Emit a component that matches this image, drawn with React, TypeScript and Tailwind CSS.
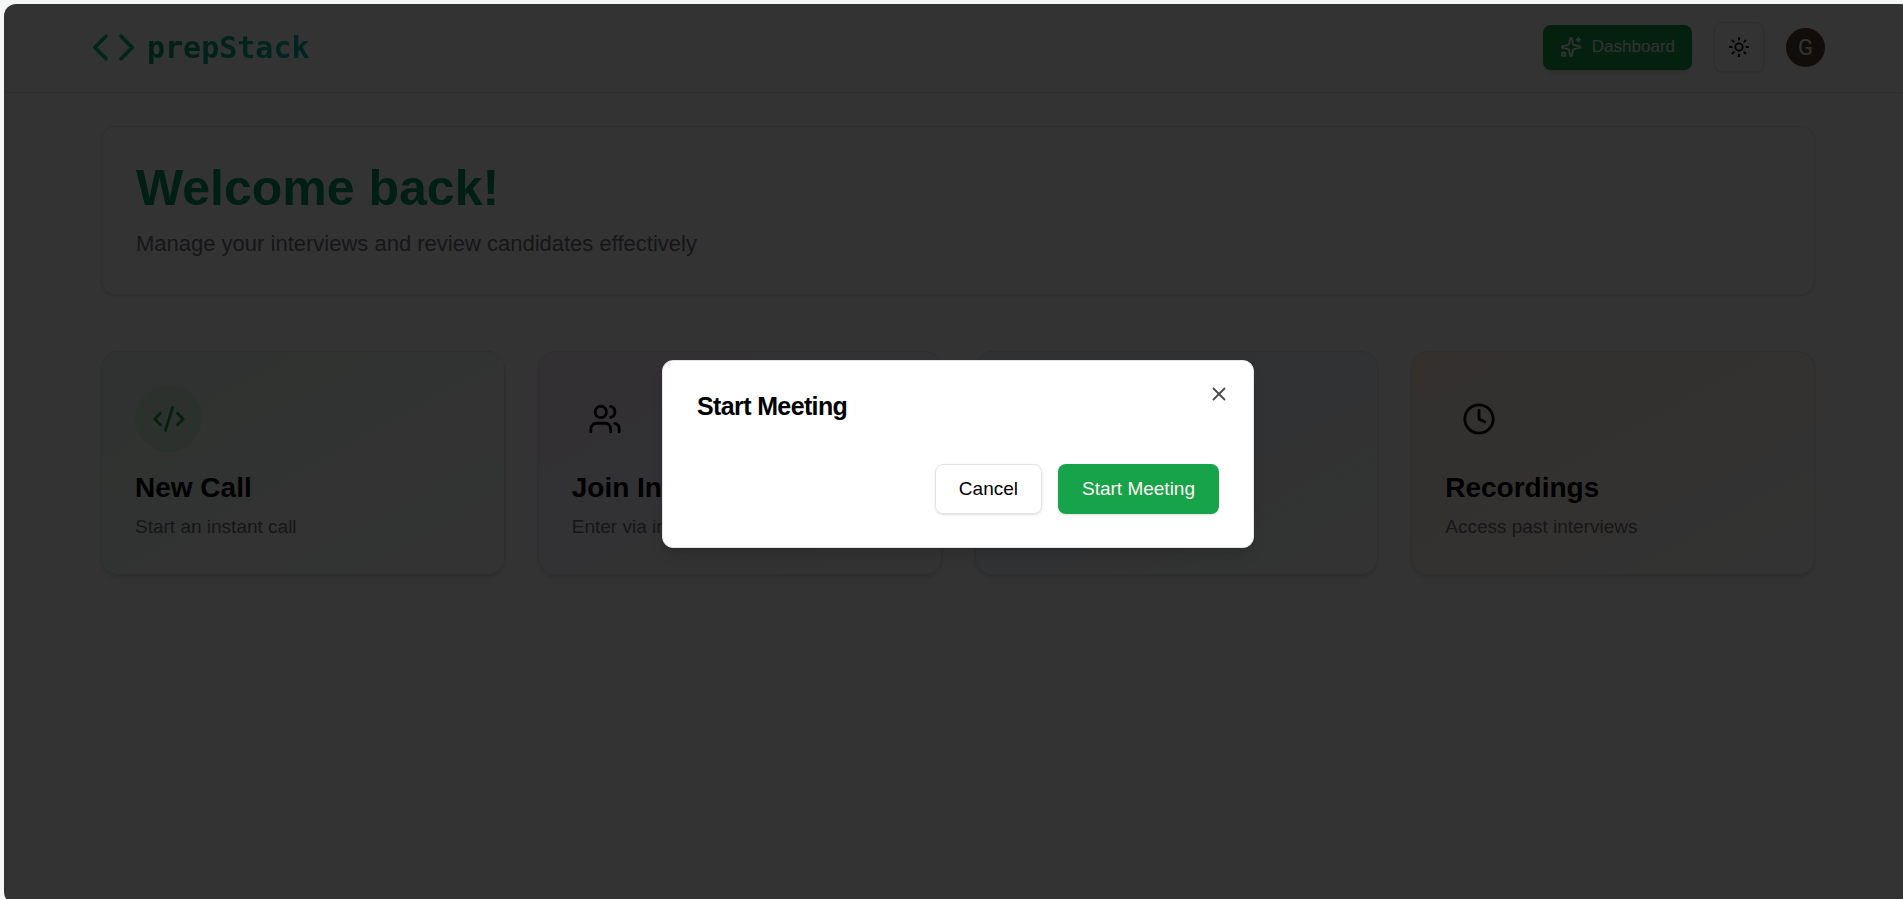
import type { LucideIcon } from "lucide-react";
import { Code, CodeXml, Users, Calendar, Clock, Sun, X } from "lucide-react";

type Action = {
  title: string;
  description: string;
  icon: LucideIcon;
  card: string;
  badge: string;
};

const actions: Action[] = [
  {
    title: "New Call",
    description: "Start an instant call",
    icon: CodeXml,
    card: "from-[#22c55e]/8",
    badge: "bg-[#16a34a]/10 text-[#16a34a]",
  },
  {
    title: "Join Interview",
    description: "Enter via invitation link",
    icon: Users,
    card: "from-purple-500/10",
    badge: "text-black",
  },
  {
    title: "Schedule",
    description: "Plan upcoming calls",
    icon: Calendar,
    card: "from-blue-500/10",
    badge: "text-black",
  },
  {
    title: "Recordings",
    description: "Access past interviews",
    icon: Clock,
    card: "from-orange-500/10",
    badge: "text-black",
  },
];

function SparkleIcon() {
  return (
    <svg
      viewBox="0 0 24 24"
      className="size-[22px]"
      fill="none"
      stroke="currentColor"
      strokeWidth="2"
      strokeLinecap="round"
      strokeLinejoin="round"
      aria-hidden="true"
    >
      <path d="M11.017 2.814a1 1 0 0 1 1.966 0l1.051 5.558a2 2 0 0 0 1.594 1.594l5.558 1.051a1 1 0 0 1 0 1.966l-5.558 1.051a2 2 0 0 0-1.594 1.594l-1.051 5.558a1 1 0 0 1-1.966 0l-1.051-5.558a2 2 0 0 0-1.594-1.594l-5.558-1.051a1 1 0 0 1 0-1.966l5.558-1.051a2 2 0 0 0 1.594-1.594z" />
      <path d="M20 2v4" />
      <path d="M22 4h-4" />
      <circle cx="4" cy="20" r="2" />
    </svg>
  );
}

function Header() {
  return (
    <header className="border-b border-zinc-200">
      <div className="mx-auto flex h-[88px] w-full max-w-[1734px] items-center justify-between pb-0.5">
        <a href="#home" className="flex items-center gap-[11px]">
          <Code className="size-[45px] text-emerald-500" />
          <span className="bg-linear-to-r from-emerald-600 to-teal-500 bg-clip-text font-['DejaVu_Sans_Mono',monospace] text-[30px] font-bold text-transparent">
            prepStack
          </span>
        </a>
        <div className="flex items-center gap-[22px]">
          <button className="flex h-[45px] items-center gap-2.5 rounded-lg bg-[#16a34a] px-[17px] text-[17px] text-zinc-50 shadow-md">
            <SparkleIcon />
            Dashboard
          </button>
          <button
            aria-label="Toggle theme"
            className="flex size-[50px] items-center justify-center rounded-lg border border-zinc-200 shadow-sm"
          >
            <Sun className="size-[22px]" />
          </button>
          <button
            aria-label="Account"
            className="flex size-[39px] items-center justify-center rounded-full bg-[#5d4037] font-['Roboto',sans-serif] text-[22px] text-white"
          >
            G
          </button>
        </div>
      </div>
    </header>
  );
}

function ActionCard({ title, description, icon: Icon, card, badge }: Action) {
  return (
    <article
      className={`rounded-[17px] border border-zinc-200 bg-linear-to-br to-transparent p-[33px] shadow-md ${card}`}
    >
      <div className={`flex size-[67px] items-center justify-center rounded-full ${badge}`}>
        <Icon className="size-[34px]" />
      </div>
      <h2 className="mt-4 text-[28px] leading-[39px] font-bold">{title}</h2>
      <p className="mt-1.5 text-[19px] leading-7 text-zinc-500">{description}</p>
    </article>
  );
}

function StartMeetingDialog() {
  return (
    <div
      role="dialog"
      aria-modal="true"
      aria-labelledby="dialog-title"
      className="relative w-full max-w-[592px] rounded-[11px] border border-zinc-200 bg-white px-[34px] py-[33px] shadow-lg"
    >
      <h2 id="dialog-title" className="text-[25px] leading-[25px] font-semibold tracking-tight">
        Start Meeting
      </h2>
      <div className="mt-[45px] flex justify-end gap-4">
        <button className="h-[50px] rounded-lg border border-zinc-200 px-[23px] text-[19px] shadow-sm">
          Cancel
        </button>
        <button className="h-[50px] rounded-lg bg-[#16a34a] px-6 text-[19px] text-rose-50 shadow-sm">
          Start Meeting
        </button>
      </div>
      <button aria-label="Close" className="absolute top-[22px] right-[23px] opacity-70">
        <X className="size-[22px]" />
      </button>
    </div>
  );
}

export default function App() {
  return (
    <div className="h-screen overflow-hidden bg-[#f5f6f6] pt-1 pl-1 font-['Liberation_Sans',Arial,sans-serif]">
      <div className="relative -mr-[9px] min-h-[calc(100vh+1px)] overflow-hidden rounded-xl bg-white text-black">
        <Header />
        <main className="mx-auto w-full max-w-[1714px] py-[33px]">
          <section className="rounded-[14px] border border-zinc-200 px-[34px] py-[33px] shadow-sm">
            <h1 className="text-[50px] leading-[56px] font-bold text-emerald-600">Welcome back!</h1>
            <p className="mt-[11px] text-[22px] leading-[34px] text-zinc-500">
              Manage your interviews and review candidates effectively
            </p>
          </section>
          <section className="mt-14 grid grid-cols-4 gap-[33px]">
            {actions.map((action) => (
              <ActionCard key={action.title} {...action} />
            ))}
          </section>
        </main>
        <div className="absolute inset-0 flex items-center justify-center bg-black/80">
          <StartMeetingDialog />
        </div>
      </div>
    </div>
  );
}
